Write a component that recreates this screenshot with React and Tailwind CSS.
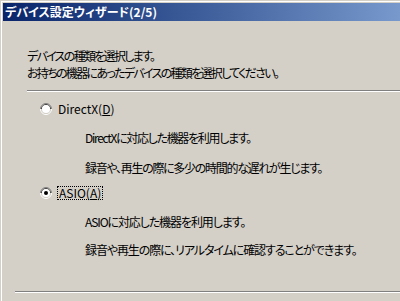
import React from 'react'

const Radio = ({ checked }) => (
  <svg width="12" height="12" viewBox="0 0 12 12" className="shrink-0">
    <path d="M0.5 6 A5.5 5.5 0 0 1 11.5 6" fill="none" stroke="#808080" />
    <path d="M1.5 6 A4.5 4.5 0 0 1 10.5 6" fill="none" stroke="#404040" />
    <path d="M11.5 6 A5.5 5.5 0 0 1 0.5 6" fill="none" stroke="#ffffff" />
    <path d="M10.5 6 A4.5 4.5 0 0 1 1.5 6" fill="none" stroke="#d4d0c8" />
    <circle cx="6" cy="6" r="4" fill="#ffffff" />
    {checked && <circle cx="6" cy="6" r="2" fill="#000000" />}
  </svg>
)

const App = () => {
  return (
    <div className="w-[400px] h-[301px] overflow-hidden bg-[#d4d0c8] text-[12px] text-black font-['Noto_Sans_CJK_JP',sans-serif] [font-feature-settings:'palt'] select-none">
      <div className="h-full pl-[1px] pt-[1px]">
        <div className="h-full border-l border-t border-white pl-[1px] pt-[1px]">
          {/* title bar */}
          <div className="h-[18px] bg-gradient-to-r from-[#0a246a] to-[#7899cc] flex items-center pl-[2px]">
            <span className="text-white font-bold leading-none">デバイス設定ウィザード(2/5)</span>
          </div>

          {/* header text */}
          <div className="pl-[24px] pt-[26px] leading-[17px] tracking-[-1.7px]">
            <div>デバイスの種類を選択します。</div>
            <div>お持ちの機器にあったデバイスの種類を選択してください。</div>
          </div>

          <div className="ml-[24px] mt-[9px] border-t border-b border-t-[#808080] border-b-white" />

          {/* options */}
          <div className="pl-[37px] pt-[9px]">
            <div className="flex items-center h-[16px] gap-[6px]">
              <Radio />
              <span className="leading-none">DirectX(<span className="underline">D</span>)</span>
            </div>
            <div className="pl-[45px] pt-[6px] leading-[30px] tracking-[-1.3px]">
              <div>DirectXに対応した機器を利用します。</div>
              <div>録音や、再生の際に多少の時間的な遅れが生じます。</div>
            </div>
            <div className="flex items-center h-[16px] gap-[5px] mt-[2px]">
              <Radio checked />
              <span className="leading-[12px] border border-dotted border-black px-[1px]">ASIO(<span className="underline">A</span>)</span>
            </div>
            <div className="pl-[45px] pt-[7px] leading-[28px] tracking-[-1.1px]">
              <div>ASIOに対応した機器を利用します。</div>
              <div>録音や再生の際に、リアルタイムに確認することができます。</div>
            </div>
          </div>

          <div className="ml-[12px] mt-[27px] border-t border-b border-t-[#808080] border-b-white" />
        </div>
      </div>
    </div>
  )
}

export default App
